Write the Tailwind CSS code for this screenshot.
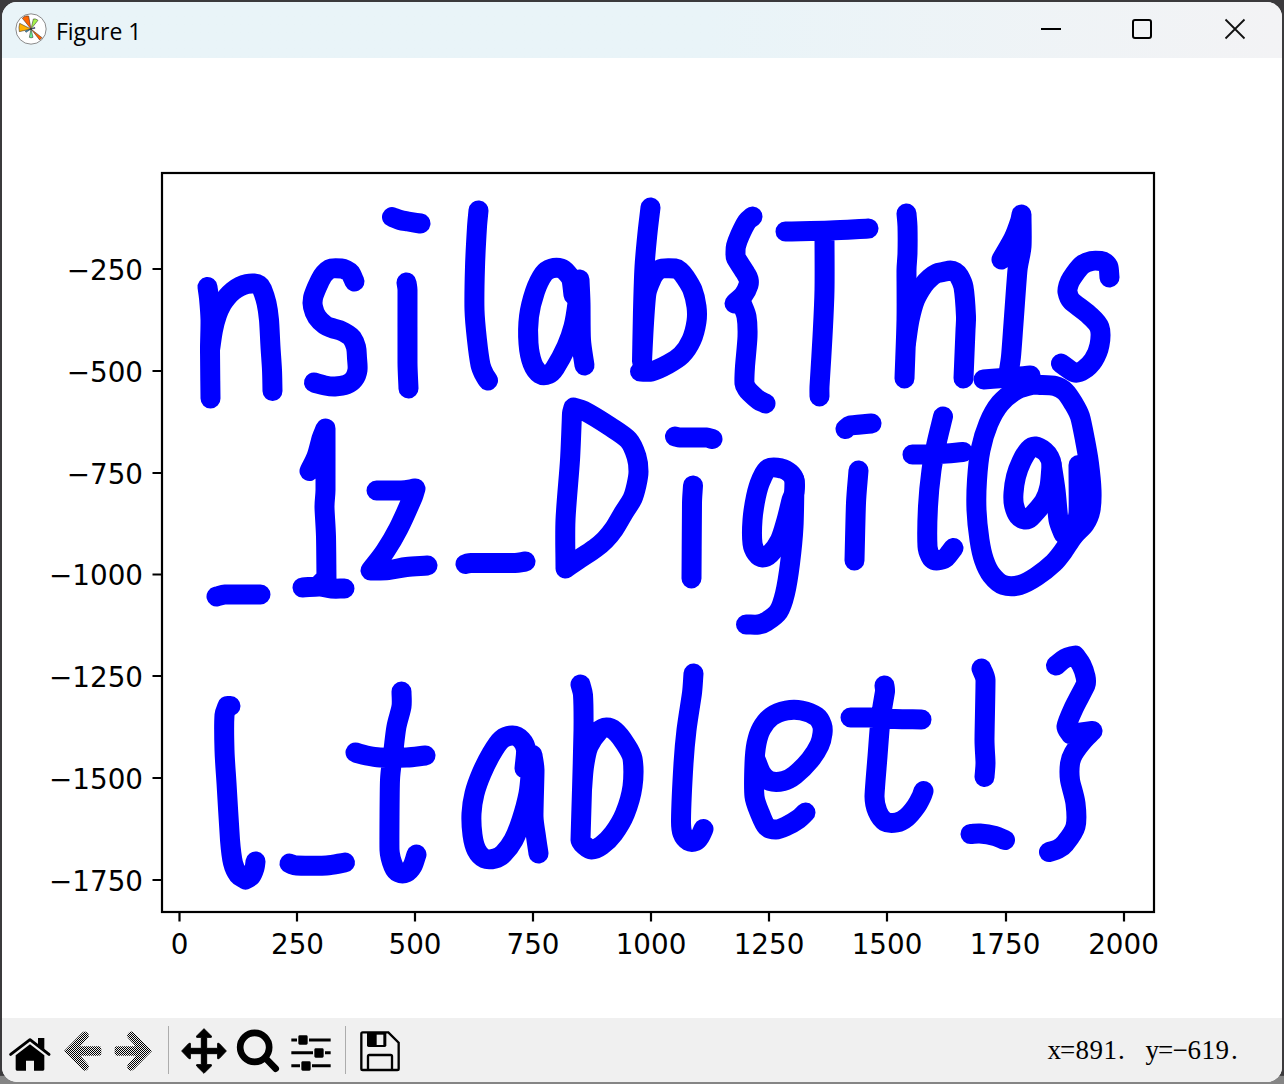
<!DOCTYPE html>
<html lang="en">
<head>
<meta charset="utf-8">
<title>Figure 1</title>
<script src="https://cdn.jsdelivr.net/npm/@tailwindcss/browser@4"></script>
</head>
<body class="h-[1084px] w-[1284px] overflow-hidden bg-gradient-to-b from-[#3b3a3c] from-[99.2%] to-[#858585] to-[99.3%] p-0.5">
<div class="flex h-[1080px] w-[1280px] flex-col overflow-hidden rounded-[15px] bg-white">

  <header class="flex h-14 shrink-0 items-center bg-gradient-to-r from-[#e9f4f8] from-55% to-[#f3f3f5] pl-[13px]">
    <svg class="h-8 w-8 -translate-y-px" viewBox="45 39 96 96">
      <circle cx="93" cy="87" r="45.5" fill="#fff" stroke="#8b8b8b" stroke-width="3"/>
      <g stroke="#222" stroke-width="1.5">
        <path d="M93 87 67 55Q74 45 86 48Z" fill="#ff6400"/>
        <path d="M93 87 58 95Q55 82 59 70Z" fill="#ffb000"/>
        <path d="M93 87 100 57Q107 55 114 61Z" fill="#a5f34c"/>
        <path d="M93 87 99 112Q93 115 88 112Z" fill="#67ee91"/>
        <path d="M93 87 126 113 119 120Z" fill="#ff6400"/>
        <path d="M93 87 76 93 78 97Z" fill="#2da9e9"/>
        <path d="M93 87 104 82 105 85Z" fill="#163fc8"/>
      </g>
    </svg>
    <span class="ml-[9px] mt-0.5 font-['Open_Sans',sans-serif] text-[23px] leading-8 tracking-[-0.05px] text-black">Figure 1</span>
    <div class="ml-auto flex items-center pr-9">
      <svg class="mr-[69px] h-[22px] w-[22px] -translate-y-px" viewBox="0 0 22 22"><path d="M1 11H21" stroke="#000" stroke-width="2"/></svg>
      <svg class="mr-[71px] h-[22px] w-[22px] -translate-y-px" viewBox="0 0 22 22"><rect x="2" y="2" width="18" height="18" rx="2" fill="none" stroke="#000" stroke-width="2"/></svg>
      <svg class="h-[22px] w-[22px] -translate-y-px" viewBox="0 0 22 22"><path d="M1.5 1.5 20.5 20.5M20.5 1.5 1.5 20.5" stroke="#111" stroke-width="1.8"/></svg>
    </div>
  </header>

  <main class="h-[960px] shrink-0">
    <svg class="block h-[960px] w-[1280px]" viewBox="2 58 1280 960">
      <!-- pen strokes -->
      <g id="strokes" fill="none" stroke="#0000ff" stroke-width="20" stroke-linecap="round" stroke-linejoin="round">
        <path d="M207.5 287 209 298 210.5 320 210 350 210.5 398.5"/>
        <path d="M210 350 213 330 217 315 222 304 227 297 233 291 240 286.5 247 284 254 283.5 259 285 262 289 266.5 303 269 320 270.5 347 272 370 272.5 391"/>
        <path d="M354.5 281.5 350.5 273 346 270 341.5 268.5 331 268.5 327 271 322.5 276 317 287 313 298 313 307 317 317 325 325 332 328 341.5 331 347 334 352 338 356 347 357 358 357.5 370 354 379 346.5 384.5 335 386.5 325 385.5 314 382.5"/>
        <path d="M392 217 400 220 408 221.5 420.5 223.5M406.5 282.5 407.5 290 407.5 363 408.5 388.5"/>
        <path d="M478.5 210.5 477 227 475 267 474.5 310 477 340 480.5 365 484 374 488 380.5"/>
        <path d="M573.5 295 571.5 280 567 273 561.5 268.5 551.5 268.5 543.5 274 535 291.5 529 316.5 528.5 343.5 532.5 363.5 540 374 549 374 555 368 566.5 346.5 573.5 326.5 577.5 303 579.5 279.5 580.5 303 581 340 584.5 365.5"/>
        <path d="M650.5 207.5 647.5 233 644.5 267 643 310 642 361.5 644 323 646.5 293 652 278 656 272 662.5 268.5 675 268.5 680 271 685 277 692.5 290 696.5 306.5 696.5 321.5 691.5 340 681.5 355 666.5 365 651.5 371.5 640 371.5"/>
        <path d="M752.5 216.5 747 221.5 740 235 736 246 735.5 253 736 258 746 274 748.5 279 748.5 285 743.5 295 734.5 303.5 741.5 303 746.5 316.5 747.5 336.5 745 366.5 744.5 383.5 747 389 750 392.5 758.5 400 765.5 403.5"/>
        <path d="M785.5 231.5 830 230.5 868.5 228.5M824.5 233 824.5 290 822.5 336.5 819.5 386.5 819.5 396.5"/>
        <path d="M906.5 213.5 907.5 226.5 907.5 253 906.5 270 906.5 320 904.5 378.5"/>
        <path d="M906 343 909.5 320 915 300 923.5 285 930 278 936.5 273.5 943 272 950.5 270.5 955 272 959 276 963.5 287 966 316.5 965.5 330 963.5 378.5"/>
        <path d="M1001.5 259.5 1013.5 238.5 1020 221.5 1021.5 214.5 1021.5 246.5 1017.5 270 1013.5 323.5 1011 356.5 1008.5 373.5M983.5 379.5 1010 377.5 1030.5 375.5"/>
        <path d="M1109.5 277.5 1108.5 267 1105 262.5 1101 261 1091.5 261 1081.5 265.5 1071.5 278.5 1068.5 285 1067.5 292 1071.5 301 1088.5 314.5 1099.5 327.5 1099.5 345 1093.5 360 1083.5 370 1074.5 372.5 1061 363.5"/>

        <path d="M216.5 596.5 225 594.5 260.5 594.5"/>
        <path d="M309.5 471 316.5 456.5 321.5 438.5 325.5 428.5 325.5 490 324.5 507 326 536.5 326.5 580M302.5 587.5 320 586.5 331.5 588.5 344.5 588.5M326 578 318 586"/>
        <path d="M376.5 490.5 401.5 490.5 415.5 488.5 413 496.5 398.5 528.5 385 551.5 370.5 570.5 388.5 570 406.5 567 427.5 565.5"/>
        <path d="M465.5 564 471 563 515 563 525.5 561.5"/>
        <path d="M565.5 568.5 565.5 520 570 460 572 413.5 573.5 407.5 583.5 410.5 610 426.5 628.5 440 636.5 456.5 638.5 471.5 636.5 485 632.5 498.5 623.5 513 614 529 605 540 595 548.5 580 558.5 565.5 568.5"/>
        <path d="M675 436.5 680 437.5 706.5 437.5 712.5 439M693 485.5 692 503 691.5 578.5"/>
        <path d="M794.5 480 790 473 781.5 468.5 768.5 468.5 761 480 756 496.5 752.5 520 752.5 543.5 756.5 553.5 762.5 557.5 770 554 780 540 786.5 520 791.5 500 794.5 492 794.5 480"/>
        <path d="M794.5 480 793.5 526.5 790 563.5 785 593.5 778.5 611.5 766.5 621.5 758.5 624.5 746 624.5"/>
        <path d="M845.5 429 850 425.5 871.5 423.5M858.5 470.5 856 503 854.5 560.5"/>
        <path d="M943 416.5 936.5 443.5 931.5 470 928 506.5 927.5 546.5 930.5 556.5 934 560 940 560 946 557.5 953.5 548M912.5 454.5 940 454 963 452"/>
        <path d="M1031.5 385 1040 385 1055 386 1065 391.5 1073.5 403.5 1080 416.5 1085 440 1089 463.5 1091.5 490 1090.5 510 1085 523.5 1073.5 536 1063 551.5 1053.5 563 1036.5 576.5 1020 585 1003.5 585 991.5 575 984 560 979.5 540 976.5 510 977 480 980.5 450 988.5 423.5 1000 403.5 1016.5 390 1031.5 385"/>
        <path d="M1051.5 463.5 1049.5 457.5 1045 451.5 1035.5 446.5 1029 449.5 1021.5 461.5 1016 476.5 1013.5 493 1014 505 1018.5 516 1025 519.5 1030.5 517.5 1044 501.5 1049.5 486.5 1051.5 463.5"/>
        <path d="M1051.5 463.5 1055.5 490 1058.5 520 1063.5 534 1073.5 532 1078.5 513 1078.5 465"/>

        <path d="M230.5 706 227.5 706 224.5 715 224.5 750 226.5 783 230 840 233 863 238.5 875 245.5 879.5 251 876 254.5 868 255.5 861.5"/>
        <path d="M289.5 863.5 296.5 865.5 326.5 865.5 345 862.5"/>
        <path d="M401.5 691.5 401.5 706.5 396.5 726.5 393.5 750 390 780 389.5 850 393.5 866.5 398.5 872.5 406.5 872.5 412.5 866 416.5 854.5M355.5 752.5 366.5 755.5 380 757.5 406.5 757.5 425.5 755.5"/>
        <path d="M524.5 768.5 526 750 521.5 740 512.5 735.5 501.5 739.5 491.5 753.5 481.5 773.5 474.5 793.5 471.5 813.5 472.5 835 476.5 850 484.5 858.5 495 858.5 503.5 853.5 513.5 840 521.5 820 528.5 793.5 531 770 532.5 755 534.5 770 533.5 816.5 536 836.5 538.5 853.5"/>
        <path d="M580.5 684.5 583 695 583.5 730 582 790 580.5 840 584 845 591.5 849.5 601.5 845.5 613.5 833.5 625 813.5 632.5 786.5 632.5 758.5 625 743.5 615 731 606.5 727.5 598.5 731.5 588.5 746.5 584 766.5 582 790"/>
        <path d="M693.5 673.5 692 693 686.5 730 683.5 763.5 681 820 682.5 833.5 688.5 841 696 841 700 836.5 703.5 829"/>
        <path d="M755 758 761.5 773.5 770 781 783.5 781 795 775 810 760 819.5 745 822.5 733.5 822 725 816.5 716.5 801.5 710.5 786.5 710.5 771.5 716.5 761.5 728.5 756.5 743.5 754.5 763.5 754.5 796.5 760 813.5 766.5 826.5 776 829.5 786.5 826 798.5 819 805.5 812.5"/>
        <path d="M884.5 685.5 885 691.5 880.5 720 877.5 756.5 874.5 796.5 877.5 811.5 885 821.5 896.5 822.5 906.5 817.5 916 806.5 921.5 796.5 923.5 791M850.5 717.5 870 717.5 895 719 921.5 719.5"/>
        <path d="M981.5 668.5 985.5 680 984.5 740 985.5 763 984.5 777M970.5 834 980 833.5 995 836 1005 840"/>
        <path d="M1056 665.5 1065 658.5 1075 655.5 1081.5 665 1085.5 676.5 1085.5 685 1073.5 708.5 1066.5 726.5 1070.5 734 1092.5 731 1083.5 740 1073.5 753.5 1070 763.5 1070 780 1075.5 803.5 1075.5 826.5 1065 843.5 1058 849 1049 852"/>
      </g>
      <!-- axes -->
      <g fill="none" stroke="#000" stroke-width="2.2">
        <rect x="162" y="173" width="992" height="739"/>
        <path d="M179.5 912v9.5M297 912v9.5M415 912v9.5M533 912v9.5M651 912v9.5M769 912v9.5M887 912v9.5M1006 912v9.5M1124 912v9.5"/>
        <path d="M162 269h-9.5M162 371h-9.5M162 473h-9.5M162 574.5h-9.5M162 676h-9.5M162 778h-9.5M162 880h-9.5"/>
      </g>
      <g class="font-['DejaVu_Sans',sans-serif] text-[27.78px]" fill="#000" text-anchor="middle">
        <text x="179.5" y="954">0</text><text x="297.5" y="954">250</text><text x="415" y="954">500</text><text x="533" y="954">750</text><text x="651" y="954">1000</text><text x="769" y="954">1250</text><text x="887" y="954">1500</text><text x="1005" y="954">1750</text><text x="1123.5" y="954">2000</text>
      </g>
      <g class="font-['DejaVu_Sans',sans-serif] text-[27.78px]" fill="#000" text-anchor="end">
        <text x="143" y="279.5">−250</text><text x="143" y="381.5">−500</text><text x="143" y="483.5">−750</text><text x="143" y="585">−1000</text><text x="143" y="686.5">−1250</text><text x="143" y="788.5">−1500</text><text x="143" y="890.5">−1750</text>
      </g>
    </svg>
  </main>

  <footer class="flex h-16 shrink-0 items-center bg-[#f0f0f0] pl-1.5">
    <svg class="h-16 w-12" viewBox="24 24 144 192">
      <path d="M114 84H133V122L114 106Z"/>
      <path d="M32 133 90 89 147 133" fill="none" stroke="#000" stroke-width="9" stroke-linecap="round" stroke-linejoin="round"/>
      <path d="M90 103 133 136V178Q133 182 129 182H102V152H78V182H51Q47 182 47 178V136Z"/>
    </svg>
    <svg class="ml-1 h-16 w-[46px]" viewBox="180 24 138 192">
      <defs>
        <pattern id="dither" width="6" height="6" patternUnits="userSpaceOnUse"><path d="M0 0H3V3H0ZM3 3H6V6H3Z" fill="#000" shape-rendering="crispEdges"/></pattern>
      </defs>
      <path d="M192 123 246 68Q254 61 262 68 270 75 264 84L241 109H297Q304 109 304 116V130Q304 137 297 137H241L264 163Q270 172 262 179 254 186 246 178Z" fill="url(#dither)"/>
    </svg>
    <svg class="ml-1 h-16 w-[46px]" viewBox="330 24 138 192">
      <path d="M456 123 402 68Q394 61 386 68 378 75 384 84L407 109H351Q344 109 344 116V130Q344 137 351 137H407L384 163Q378 172 386 179 394 186 402 178Z" fill="url(#dither)"/>
    </svg>
    <div class="ml-3 h-12 w-px bg-[#acacac]"></div>
    <svg class="ml-3 h-16 w-[46px]" viewBox="33 24 138 192">
      <path d="M102 56 124 78V82H110V115H143V100H147L169 123 147 146H143V131H110V164H124V168L102 190 80 168V164H94V131H61V146H57L35 123 57 100H61V115H94V82H80V78Z" stroke="#000" stroke-width="3" stroke-linejoin="round"/>
    </svg>
    <svg class="ml-[9px] h-16 w-11" viewBox="198 24 132 192" fill="none" stroke="#000">
      <circle cx="254" cy="112" r="43.5" stroke-width="20"/><path d="M286 144 317 176" stroke-width="20" stroke-linecap="round"/>
    </svg>
    <svg class="ml-2.5 h-16 w-[42px]" viewBox="360 24 126 192">
      <path d="M364 90H482M364 128H482M364 167H482" stroke="#000" stroke-width="9"/>
      <g stroke="#f0f0f0" stroke-width="4"><rect x="383" y="74" width="32" height="32" rx="6"/><rect x="431" y="113" width="32" height="32" rx="6"/><rect x="392" y="152" width="32" height="32" rx="6"/></g>
    </svg>
    <div class="ml-[13px] h-12 w-px bg-[#acacac]"></div>
    <svg class="ml-[13px] h-16 w-[42px]" viewBox="567 24 126 192">
      <path d="M578 67H655L686 98V176Q686 180 682 180H578Q574 180 574 176V71Q574 67 578 67Z" fill="none" stroke="#000" stroke-width="7"/>
      <path d="M591 68H649V106Q649 111 644 111H596Q591 111 591 106Z"/>
      <path d="M620 74H640V105H620Z" fill="#f0f0f0"/>
      <path d="M594 180V139Q594 135 598 135H662Q666 135 666 139V180" fill="none" stroke="#000" stroke-width="7"/>
    </svg>
    <svg class="ml-auto mr-8 h-16 w-[204px]" viewBox="1046 1018 204 64">
      <text class="font-['Liberation_Serif',serif] text-[27px]" y="1059" x="1047.5 1060 1075.5 1089.5 1103.5 1118">x=891.</text>
      <text class="font-['Liberation_Serif',serif] text-[27px]" y="1059" x="1145.5 1158 1172.5 1187.5 1201.5 1215.5 1231">y=−619.</text>
    </svg>
  </footer>
</div>
<script>
  // Smooth each pen stroke through its sample points; turns sharper than 60 degrees stay corners.
  function smooth(points) {
    const n = points.length;
    const seg = [];
    for (let i = 0; i < n - 1; i++) {
      const dx = points[i + 1][0] - points[i][0], dy = points[i + 1][1] - points[i][1];
      const len = Math.hypot(dx, dy);
      seg.push({ len, ux: dx / len, uy: dy / len });
    }
    const closed = n > 3 && points[0][0] === points[n - 1][0] && points[0][1] === points[n - 1][1];
    // Handle at point i; its length is bounded by the shorter neighbour so long runs stay straight.
    const handle = (i, s) => {
      const a = i > 0 ? seg[i - 1] : closed ? seg[n - 2] : null;
      const b = i < n - 1 ? seg[i] : closed ? seg[0] : null;
      if (!a || !b || a.ux * b.ux + a.uy * b.uy < 0.5) return [s.ux * s.len / 3, s.uy * s.len / 3];
      const tx = a.ux * a.len + b.ux * b.len, ty = a.uy * a.len + b.uy * b.len;
      const k = Math.min(a.len, b.len) / 3 / Math.hypot(tx, ty);
      return [tx * k, ty * k];
    };
    let d = `M${points[0]}`;
    for (let i = 0; i < n - 1; i++) {
      const h0 = handle(i, seg[i]), h1 = handle(i + 1, seg[i]);
      const [x0, y0] = points[i], [x1, y1] = points[i + 1];
      d += `C${x0 + h0[0]},${y0 + h0[1]} ${x1 - h1[0]},${y1 - h1[1]} ${x1},${y1}`;
    }
    return d;
  }
  for (const path of document.querySelectorAll('#strokes path')) {
    const subpaths = path.getAttribute('d').split('M').filter(Boolean);
    path.setAttribute('d', subpaths.map(sub => {
      const v = sub.trim().split(/\s+/).map(Number), points = [];
      for (let i = 0; i < v.length; i += 2) points.push([v[i], v[i + 1]]);
      return smooth(points);
    }).join(''));
  }
</script>
</body>
</html>
